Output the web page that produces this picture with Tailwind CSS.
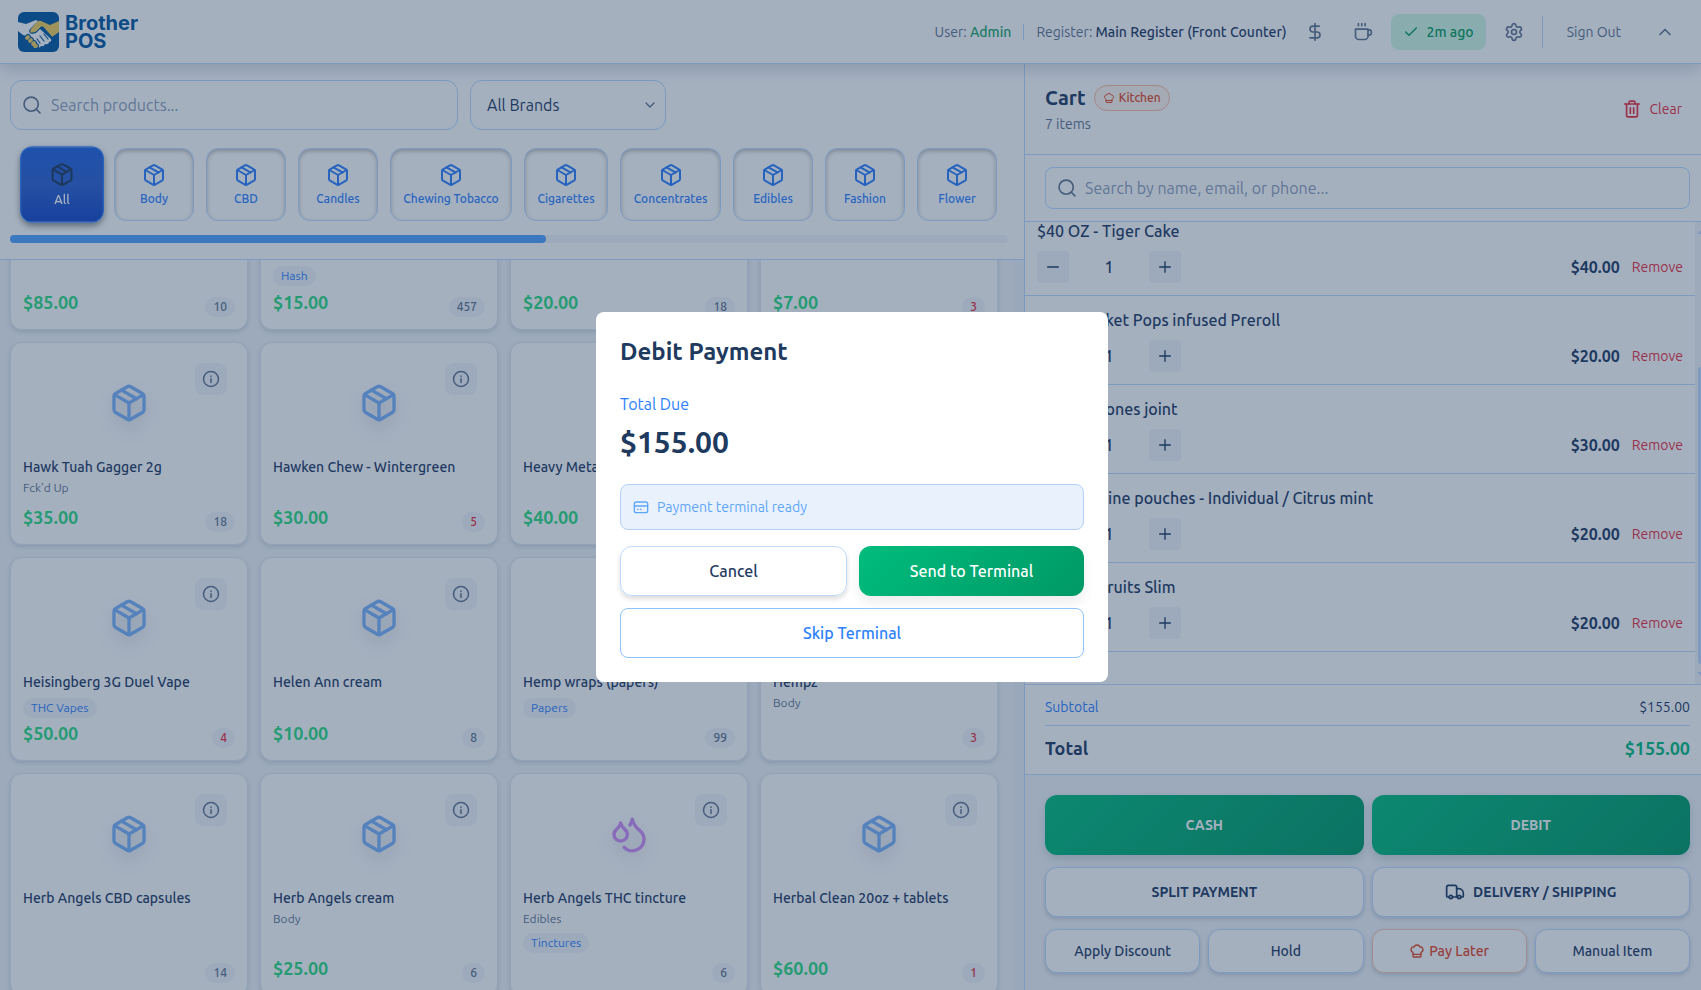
<!DOCTYPE html>
<html lang="en">
<head>
<meta charset="utf-8">
<title>Brother POS</title>
<script src="https://cdn.jsdelivr.net/npm/@tailwindcss/browser@4"></script>
</head>
<body class="font-[Ubuntu,'Noto_Sans',sans-serif] text-[#1e3a5f] [stroke-linecap:round] [stroke-linejoin:round]">

<!-- Icon sprite -->
<svg class="hidden" aria-hidden="true">
  <symbol id="i-package" viewBox="0 0 24 24"><path d="M11 21.73a2 2 0 0 0 2 0l7-4A2 2 0 0 0 21 16V8a2 2 0 0 0-1-1.73l-7-4a2 2 0 0 0-2 0l-7 4A2 2 0 0 0 3 8v8a2 2 0 0 0 1 1.73z"/><path d="M12 22V12"/><path d="M3.3 7 12 12l8.7-5"/><path d="m7.500 4.270 9 5.150"/></symbol>
  <symbol id="i-drops" viewBox="0 0 24 24"><path d="M7 16.3c2.2 0 4-1.83 4-4.05 0-1.16-.57-2.26-1.71-3.19S7.29 6.75 7 5.3c-.29 1.45-1.14 2.84-2.29 3.76S3 11.1 3 12.25c0 2.22 1.8 4.05 4 4.05z"/><path d="M12.56 6.6A10.97 10.97 0 0 0 14 3.02c.5 2.5 2 4.9 4 6.5s3 3.5 3 5.5a6.98 6.98 0 0 1-11.91 4.97"/></symbol>
  <symbol id="i-info" viewBox="0 0 24 24"><circle cx="12" cy="12" r="10"/><path d="M12 16.5v-5M12 8v.5"/></symbol>
  <symbol id="i-search" viewBox="0 0 24 24"><circle cx="11" cy="11" r="8.5"/><path d="m21.5 21.5-4.4-4.4"/></symbol>
  <symbol id="i-dollar" viewBox="0 0 24 24"><path d="M12 2v20"/><path d="M17 5H9.5a3.5 3.5 0 0 0 0 7h5a3.5 3.5 0 0 1 0 7H6"/></symbol>
  <symbol id="i-coffee" viewBox="0 0 24 24"><path d="M3 8.5h15V17a4 4 0 0 1-4 4H7a4 4 0 0 1-4-4z"/><path d="M18 9.5h1.5a2.5 2.5 0 0 1 2.5 2.5v1a3 3 0 0 1-3 3h-1"/><path d="M6.5 2v2.5M10.5 2v2.5M14.5 2v2.5"/></symbol>
  <symbol id="i-check" viewBox="0 0 24 24"><path d="M20 6 9 17l-5-5"/></symbol>
  <symbol id="i-gear" viewBox="0 0 24 24"><path d="M9.671 4.136a2.34 2.34 0 0 1 4.659 0 2.34 2.34 0 0 0 3.319 1.915 2.34 2.34 0 0 1 2.33 4.033 2.34 2.34 0 0 0 0 3.831 2.34 2.34 0 0 1-2.33 4.033 2.34 2.34 0 0 0-3.319 1.915 2.34 2.34 0 0 1-4.659 0 2.34 2.34 0 0 0-3.32-1.915 2.34 2.34 0 0 1-2.33-4.033 2.34 2.34 0 0 0 0-3.831A2.34 2.34 0 0 1 6.35 6.051a2.34 2.34 0 0 0 3.319-1.915"/><circle cx="12" cy="12" r="3"/></symbol>
  <symbol id="i-up" viewBox="0 0 24 24"><path d="m18 15-6-6-6 6"/></symbol>
  <symbol id="i-down" viewBox="0 0 24 24"><path d="m6 9 6 6 6-6"/></symbol>
  <symbol id="i-chef" viewBox="0 0 24 24"><path d="M17 21a1 1 0 0 0 1-1v-5.35c0-.457.316-.844.727-1.041a4 4 0 0 0-2.134-7.589 5 5 0 0 0-9.186 0 4 4 0 0 0-2.134 7.588c.411.198.727.584.727 1.041V20a1 1 0 0 0 1 1Z"/><path d="M6 17h12"/></symbol>
  <symbol id="i-trash" viewBox="0 0 24 24"><path d="M3.2 6h17.6"/><path d="M5.5 6v14A1.5 1.5 0 0 0 7 21.5h10a1.5 1.5 0 0 0 1.5-1.5V6"/><path d="M8.5 6V4A1.5 1.5 0 0 1 10 2.5h4A1.5 1.5 0 0 1 15.500 4v2"/><path d="M10 10.500v6.500M14 10.500v6.500"/></symbol>
  <symbol id="i-minus" viewBox="0 0 24 24"><path d="M4 12h16"/></symbol>
  <symbol id="i-plus" viewBox="0 0 24 24"><path d="M4 12h16M12 4v16"/></symbol>
  <symbol id="i-truck" viewBox="0 0 24 24"><path d="M14 18V6a2 2 0 0 0-2-2H4a2 2 0 0 0-2 2v11a1 1 0 0 0 1 1h2"/><path d="M15 18H9"/><path d="M19 18h2a1 1 0 0 0 1-1v-3.650c0-3-2.500-5.350-5-5.350h-3"/><circle cx="17" cy="18" r="2"/><circle cx="7" cy="18" r="2"/></symbol>
  <symbol id="i-card" viewBox="0 0 24 24"><rect x="2" y="4.500" width="20" height="16" rx="3"/><path d="M2 10.500h20M6.500 15.500h1M11 15.500h1"/></symbol>
</svg>

<div class="relative flex h-screen flex-col overflow-hidden bg-slate-100">

  <header class="relative z-10 flex h-16 shrink-0 items-center justify-between border-b border-blue-200 bg-white pr-4 pl-[18px] shadow-[0_6px_14px_rgba(30,58,95,0.18)]">
    <a href="#" class="flex items-center gap-[6px]" aria-label="Brother POS home">
      <svg class="h-10 w-[41px]" viewBox="0 0 41 40" aria-hidden="true">
        <clipPath id="logo-clip"><rect width="41" height="40" rx="6"/></clipPath>
        <g clip-path="url(#logo-clip)">
          <rect width="41" height="40" fill="#0057a0"/>
          <path d="M0 10 8 12l10-4 2 1-8 8q-2 4 2 5l4-1 4-4 11 10q1 3-2 3 0 3-4 2-1 3-4 2-2 3-5 0l-6-9-7-2-5-4z" fill="#fff"/>
          <path d="M41 9l-9 4-9-4q-3-1-5 2l-6 7q-1 4 3 3l3-1 5-5 2 0 9 10 7-5z" fill="#f5cf5b"/>
          <path d="M12 18q-1 4 3 3l3-1 5-5 2 0 9 10" fill="none" stroke="#0057a0" stroke-width="1"/>
          <path d="m22 24 4 5M26 22l4 5M19 27l3 4" stroke="#0057a0" stroke-width="1.200"/>
          <g stroke="#0057a0" stroke-width="6"><path d="m10 25-1 1M13 28l-1 1M16 31l-1 1M18 34l-1 0"/></g>
          <g stroke="#f5cf5b" stroke-width="3.800"><path d="m10 25-1 1M13 28l-1 1M16 31l-1 1M18 34l-1 0"/></g>
        </g>
      </svg>
      <span class="font-[Inter,sans-serif] text-[20px] leading-[18px] font-bold text-[#0057a0]">Brother<br>POS</span>
    </a>
    <div class="flex items-center gap-2 text-sm text-slate-500">
      <div class="flex items-center gap-3">
        <span>User: <span class="font-medium text-[#16a868]">Admin</span></span>
        <span class="h-4 w-px bg-blue-200"></span>
        <span>Register: <span class="font-medium text-[#1e3a5f]">Main Register (Front Counter)</span></span>
      </div>
      <button class="flex w-10 justify-center" aria-label="Cash drawer"><svg class="size-5 fill-none stroke-current stroke-2"><use href="#i-dollar"/></svg></button>
      <button class="flex w-10 justify-center" aria-label="Break"><svg class="size-5 fill-none stroke-current stroke-2"><use href="#i-coffee"/></svg></button>
      <button class="flex h-9 items-center gap-2 rounded-lg bg-emerald-100 px-3 font-medium text-[#009c5a]"><svg class="size-4 fill-none stroke-current stroke-2"><use href="#i-check"/></svg>2m ago</button>
      <button class="flex w-10 justify-center" aria-label="Settings"><svg class="size-5 fill-none stroke-current stroke-2"><use href="#i-gear"/></svg></button>
      <span class="h-8 w-px bg-blue-200"></span>
      <button class="px-4">Sign Out</button>
      <button class="flex w-10 justify-center" aria-label="Collapse header"><svg class="size-5 fill-none stroke-current stroke-2"><use href="#i-up"/></svg></button>
    </div>
  </header>

  <div class="flex min-h-0 flex-1">

    <main class="flex min-w-0 flex-1 flex-col">
      <section class="shrink-0 border-b border-blue-200 bg-white pt-4 pr-4 pb-4 pl-[10px]">
        <div class="flex gap-3">
          <label class="flex h-[50px] w-[448px] items-center gap-[9px] rounded-xl border border-blue-200 px-[11px] text-slate-500">
            <svg class="size-5 shrink-0 fill-none stroke-current stroke-2"><use href="#i-search"/></svg>
            <input type="search" aria-label="Search products" placeholder="Search products..." class="w-full min-w-0 bg-transparent text-base outline-none placeholder:text-slate-400">
          </label>
          <div class="relative w-[196px]">
            <select aria-label="Brand" class="h-[50px] w-full appearance-none rounded-xl border border-blue-200 bg-white px-4 text-base"><option>All Brands</option></select>
            <svg class="pointer-events-none absolute top-[17px] right-2 size-4 fill-none stroke-slate-500 stroke-2"><use href="#i-down"/></svg>
          </div>
        </div>
        <nav id="categories" aria-label="Categories" class="flex gap-3 overflow-hidden px-3 pt-[18px] pb-[14px]"></nav>
        <div class="h-2 rounded-full bg-slate-100"><div class="h-2 w-[536px] rounded-full bg-[#51a2ff]"></div></div>
      </section>
      <section class="flex min-h-0 flex-1 overflow-hidden" aria-label="Products">
        <div class="min-w-0 flex-1 overflow-hidden pr-4 pl-[10px]">
          <div id="products" class="-mt-3 grid grid-cols-4 gap-3"></div>
        </div>
        <div class="w-[10px] bg-[#edf2f8]"></div>
      </section>
    </main>

    <aside class="flex w-[39.8%] shrink-0 flex-col border-l border-blue-200 bg-white">
      <div class="flex items-center justify-between border-b border-blue-200 py-5 pr-[19px] pl-5">
        <div>
          <div class="flex items-center gap-2">
            <h2 class="text-xl leading-7 font-bold">Cart</h2>
            <span class="flex h-[26px] items-center gap-1 rounded-full border border-[#fdb9a0] bg-orange-50 px-2 text-xs font-medium text-[#e8431f]"><svg class="size-3 fill-none stroke-current stroke-2"><use href="#i-chef"/></svg>Kitchen</span>
          </div>
          <p class="mt-0.5 text-sm text-slate-500">7 items</p>
        </div>
        <button class="flex items-center gap-2 text-sm text-[#ee2a3c]"><svg class="size-5 fill-none stroke-current stroke-2"><use href="#i-trash"/></svg>Clear</button>
      </div>
      <div class="border-b border-blue-200 py-3 pr-[11px] pl-5">
        <label class="flex h-[42px] items-center gap-2 rounded-lg border border-blue-200 px-[11px] text-slate-500">
          <svg class="size-5 shrink-0 fill-none stroke-current stroke-2"><use href="#i-search"/></svg>
          <input type="search" aria-label="Search customers" placeholder="Search by name, email, or phone..." class="w-full min-w-0 bg-transparent text-base outline-none placeholder:text-slate-400">
        </label>
      </div>
      <div class="flex min-h-0 flex-1 overflow-hidden">
        <ul id="cart" class="-mt-[15px] min-w-0 flex-1"></ul>
        <div class="flex w-[6px] flex-col items-end overflow-hidden bg-slate-100 py-2">
          <span class="size-0 border-4 border-t-0 border-r-0 border-transparent border-b-blue-200"></span>
          <span class="mt-[133px] w-[3px] flex-1 rounded-l-full bg-blue-200"></span>
          <span class="mt-2 size-0 border-4 border-r-0 border-b-0 border-transparent border-t-blue-200"></span>
        </div>
      </div>
      <div class="border-y border-blue-200 py-3 pr-[11px] pl-5">
        <div class="flex justify-between border-b border-blue-200 pb-2 text-sm"><span class="text-blue-500">Subtotal</span><span>$155.00</span></div>
        <div class="flex justify-between pt-2 text-lg leading-7 font-bold"><span>Total</span><span class="text-emerald-500">$155.00</span></div>
      </div>
      <div class="flex flex-col gap-3 bg-slate-100 pt-5 pr-[11px] pb-[17px] pl-5 text-sm">
        <div class="grid grid-cols-2 gap-2 font-bold text-white">
          <button class="h-[60px] rounded-xl bg-linear-135 from-emerald-500 to-emerald-600 shadow-[0_4px_8px_rgba(30,58,95,0.16)]">CASH</button>
          <button class="h-[60px] rounded-xl bg-linear-135 from-emerald-500 to-emerald-600 shadow-[0_4px_8px_rgba(30,58,95,0.16)]">DEBIT</button>
        </div>
        <div class="grid grid-cols-2 gap-2 font-bold">
          <button class="h-[50px] rounded-xl border border-blue-200 bg-white shadow-[0_2px_4px_rgba(30,58,95,0.2)]">SPLIT PAYMENT</button>
          <button class="flex h-[50px] items-center justify-center gap-2 rounded-xl border border-blue-200 bg-white shadow-[0_2px_4px_rgba(30,58,95,0.2)]"><svg class="size-5 fill-none stroke-current stroke-2"><use href="#i-truck"/></svg>DELIVERY / SHIPPING</button>
        </div>
        <div class="grid grid-cols-4 gap-2 font-medium">
          <button class="h-11 rounded-xl border border-blue-200 bg-white shadow-[0_2px_4px_rgba(30,58,95,0.2)]">Apply Discount</button>
          <button class="h-11 rounded-xl border border-blue-200 bg-white shadow-[0_2px_4px_rgba(30,58,95,0.2)]">Hold</button>
          <button class="flex h-11 items-center justify-center gap-1 rounded-xl border border-[#fcc7b0] bg-white text-[#e8431f] shadow-[0_2px_4px_rgba(30,58,95,0.2)]"><svg class="size-4 fill-none stroke-current stroke-2"><use href="#i-chef"/></svg>Pay Later</button>
          <button class="h-11 rounded-xl border border-blue-200 bg-white shadow-[0_2px_4px_rgba(30,58,95,0.2)]">Manual Item</button>
        </div>
      </div>
    </aside>
  </div>

  <!-- Debit payment dialog -->
  <div class="absolute inset-0 z-20 flex items-center justify-center bg-[#1e3a5f]/40 pt-1 pl-[3px]">
    <div role="dialog" aria-modal="true" aria-labelledby="dlg-title" class="w-full max-w-lg rounded-lg bg-white p-6">
      <h2 id="dlg-title" class="text-2xl leading-8 font-bold">Debit Payment</h2>
      <p class="mt-6 text-base text-blue-500">Total Due</p>
      <p class="mt-2 text-3xl leading-9 font-bold">$155.00</p>
      <div class="mt-6 flex items-center gap-2 rounded-lg border border-[#b3d1fc] bg-[#e9f1fd] p-3 text-sm text-[#5ea6fb]"><svg class="size-4 fill-none stroke-current stroke-2"><use href="#i-card"/></svg>Payment terminal ready</div>
      <div class="mt-4 flex gap-3 font-medium">
        <button class="h-[50px] flex-1 rounded-xl border border-blue-200 shadow-[0_3px_5px_rgba(0,0,0,0.14)]">Cancel</button>
        <button class="h-[50px] flex-1 rounded-xl bg-linear-135 from-emerald-500 to-emerald-600 text-white shadow-[0_6px_12px_rgba(0,0,0,0.08)]">Send to Terminal</button>
      </div>
      <button class="mt-3 h-[50px] w-full rounded-lg border border-blue-300 font-medium text-blue-500">Skip Terminal</button>
    </div>
  </div>
</div>

<script>
const icon = (id, cls) => `<svg class="fill-none stroke-current stroke-2 ${cls}"><use href="#i-${id}"/></svg>`;

// Category tiles: name, width class
const categories = [['Body','w-20'],['CBD','w-20'],['Candles','w-20'],['Chewing Tobacco','w-[122px]'],['Cigarettes','w-[84px]'],['Concentrates','w-[101px]'],['Edibles','w-20'],['Fashion','w-20'],['Flower','w-20']];
const tile = 'flex h-[73px] shrink-0 flex-col items-center justify-center gap-1 rounded-xl border text-xs font-medium whitespace-nowrap';
document.getElementById('categories').innerHTML =
  `<button aria-pressed="true" class="${tile} w-20 scale-105 border-blue-500 bg-linear-to-b from-[#1f63e0] via-[#2b5fd0] to-[#1447c8] text-white shadow-[0_3px_6px_rgba(0,0,0,0.45)]">${icon('package','size-6 text-[#1e3a5f]')}All</button>` +
  categories.map(([n, w]) => `<button class="${tile} ${w} border-blue-200 bg-white text-blue-500 shadow-[inset_0_2px_4px_rgba(0,0,0,0.28)]">${icon('package','size-6')}${n}</button>`).join('');

// Products: name, category, tag, price, stock, low stock, icon
const products = [
  ['','','','$85.00',10],['','','Hash','$15.00',457],['','','','$20.00',18],['','','','$7.00',3,1],
  ['Hawk Tuah Gagger 2g','Fck’d Up','','$35.00',18],['Hawken Chew - Wintergreen','','','$30.00',5,1],['Heavy Metal','','','$40.00',6],['Hemp cones','','','$5.00',12],
  ['Heisingberg 3G Duel Vape','','THC Vapes','$50.00',4,1],['Helen Ann cream','','','$10.00',8],['Hemp wraps (papers)','','Papers','',99],['Hempz','Body','','',3,1],
  ['Herb Angels CBD capsules','','','',14],['Herb Angels cream','Body','','$25.00',6],['Herb Angels THC tincture','Edibles','Tinctures','',6,0,1],['Herbal Clean 20oz + tablets','','','$60.00',1,1],
];
document.getElementById('products').innerHTML = products.map(([name, cat, tag, price, qty, low, drops]) => `
  <article class="relative flex flex-col rounded-xl border border-slate-200 bg-white p-3 shadow-[0_2px_4px_rgba(30,58,95,0.16)] ${name ? 'min-h-[203px]' : 'min-h-[82px]'}">
    ${name ? `<div class="flex h-24 items-center justify-center ${drops ? 'text-[#cf8ef5]' : 'text-[#7ab3fb]'}">${icon(drops ? 'drops' : 'package', 'size-10 drop-shadow-[0_8px_8px_rgba(30,58,95,0.2)]')}</div>
    <button aria-label="Details for ${name}" class="absolute top-5 right-5 flex size-8 items-center justify-center rounded-lg bg-slate-100 text-slate-500">${icon('info','size-[18px]')}</button>
    <h3 class="mt-[6px] truncate text-sm font-medium">${name}</h3>` : ''}
    ${cat ? `<p class="mt-[3px] text-xs text-slate-500">${cat}</p>` : ''}
    ${tag ? `<p class="${name ? 'mt-[6px]' : 'mt-[5px]'} flex"><span class="h-5 rounded-full bg-slate-100 px-2 text-xs leading-5 text-blue-500">${tag}</span></p>` : ''}
    <div class="mt-auto flex items-end justify-between pt-[2px]">
      <span class="h-7 text-lg leading-[26px] font-bold text-[#2bdd82]">${price}</span>
      <span class="h-5 rounded-full bg-slate-100 px-2 text-xs leading-5 font-medium ${low ? 'text-[#ee2a3c]' : 'text-slate-500'}">${qty}</span>
    </div>
  </article>`).join('');

// Cart lines: name, price
const cart = [['$40 OZ - Tiger Cake','$40.00'],['Alien Rocket Pops infused Preroll','$20.00'],['Infused Cones joint','$30.00'],['FRE Nicotine pouches - Individual / Citrus mint','$20.00'],['Tropical Fruits Slim','$20.00']];
document.getElementById('cart').innerHTML = cart.map(([name, price]) => `
  <li class="border-b border-blue-200 p-3">
    <p class="text-base font-medium">${name}</p>
    <div class="mt-2 flex items-center">
      <button aria-label="Decrease ${name}" class="flex size-8 items-center justify-center rounded bg-slate-100">${icon('minus','size-4')}</button>
      <span class="w-20 text-center font-medium">1</span>
      <button aria-label="Increase ${name}" class="flex size-8 items-center justify-center rounded bg-slate-100">${icon('plus','size-4')}</button>
      <span class="ml-auto font-bold">${price}</span>
      <button class="ml-3 text-sm text-[#ee2a3c]">Remove</button>
    </div>
  </li>`).join('');
</script>
</body>
</html>
